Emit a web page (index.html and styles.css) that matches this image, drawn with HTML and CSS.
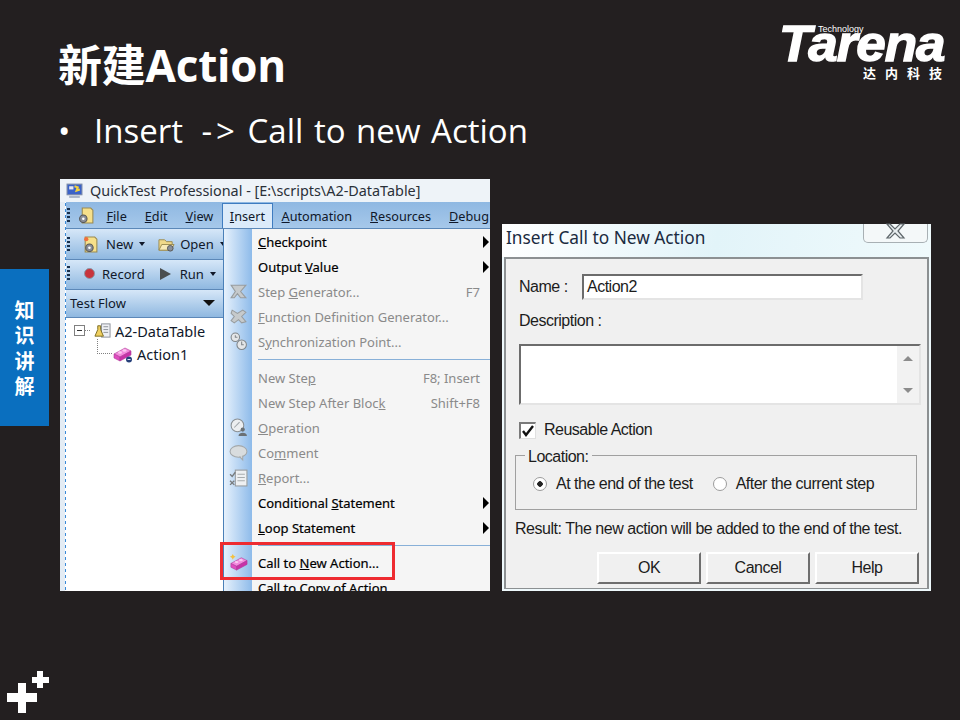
FILE: index.html
```html
<!DOCTYPE html>
<html>

<head>
  <meta charset="utf-8">
  <title>新建Action</title>
  <link rel="stylesheet" href="styles.css">
</head>

<body>
  <div class="slide">
    <div class="head">
      <h1 class="title">新建Action</h1>
      <div class="logo">
        <span class="logo-tech">Technology</span>
        <div class="logo-name">Tarena</div>
        <div class="logo-cn">达内科技</div>
      </div>
    </div>

    <div class="bullet"><span class="dot">•</span><span class="bullet-text">Insert  <span class="arw">-&gt;</span> <span class="bullet-end">Call to new Action</span></span></div>

    <div class="shots">
      <!-- QTP window -->
      <div class="qtp">
        <div class="qtp-title">
          <svg class="ico" viewBox="0 0 16 16"><rect x="1" y="2" width="14" height="10" fill="#3a62c8" stroke="#7b8aa8"/><rect x="3" y="4" width="4" height="3" fill="#e8e8f0"/><path d="M8 4l3 1-1 3 3-1" stroke="#f4d23c" stroke-width="2" fill="none"/><rect x="3" y="13" width="10" height="2" fill="#a8b4c8"/></svg>
          QuickTest Professional - [E:\scripts\A2-DataTable]
        </div>
        <div class="tb tb-menu">
          <span class="grip"></span>
          <svg class="ico" viewBox="0 0 16 16"><path d="M4 1h8l2 2v12H4z" fill="#f6e08a" stroke="#9a8a50"/><circle cx="5" cy="11" r="3.5" fill="#8a8f98" stroke="#555"/><circle cx="5" cy="11" r="1.2" fill="#fff"/></svg>
          <span class="tb-item"><u>F</u>ile</span>
          <span class="tb-item"><u>E</u>dit</span>
          <span class="tb-item"><u>V</u>iew</span>
          <span class="tb-item tb-open"><u>I</u>nsert</span>
          <span class="tb-item"><u>A</u>utomation</span>
          <span class="tb-item"><u>R</u>esources</span>
          <span class="tb-item"><u>D</u>ebug</span>
        </div>
        <div class="tb tb-tools">
          <span class="grip"></span>
          <svg class="ico ico-new" viewBox="0 0 16 16"><path d="M3 1h9l2 2v12H3z" fill="#f6e08a" stroke="#9a8a50"/><circle cx="4" cy="3" r="2" fill="#f0703c"/><circle cx="7" cy="11" r="3.5" fill="#8a8f98" stroke="#555"/><circle cx="7" cy="11" r="1.2" fill="#fff"/></svg>
          <span class="tb-item">New</span><span class="caret"></span>
          <svg class="ico ico-open" viewBox="0 0 18 16"><path d="M1 3h6l2 2h6v9H1z" fill="#f0d98a" stroke="#9a8a50"/><path d="M1 14l3-6h13l-3 6z" fill="#f8eab8" stroke="#9a8a50"/><circle cx="13" cy="12" r="3" fill="#8a8f98" stroke="#555"/></svg>
          <span class="tb-item">Open</span><span class="caret"></span>
        </div>
        <div class="tb tb-tools">
          <span class="grip"></span>
          <span class="rec"></span>
          <span class="tb-item">Record</span>
          <span class="play"></span>
          <span class="tb-item">Run</span><span class="caret"></span>
        </div>
        <div class="tb tb-flow">
          <span>Test Flow</span>
          <span class="flow-arrow"></span>
        </div>
        <div class="tree">
          <div class="tree-row">
            <span class="minus"></span><span class="hline"></span>
            <svg class="ico" viewBox="0 0 18 16"><rect x="8" y="1" width="9" height="14" fill="#eef0f4" stroke="#8a8f98"/><path d="M10 4h5M10 7h5M10 10h5" stroke="#8a8f98"/><path d="M4 3h3v4l3 7H1l3-7z" fill="#f0d060" stroke="#7a6a20"/></svg>
            <span>A2-DataTable</span>
          </div>
          <div class="tree-row tree-child">
            <span class="elbow"></span>
            <svg class="ico ico-brick" viewBox="0 0 20 18"><path d="M1 9l11-6 6 3-11 6z" fill="#f48ade" stroke="#b03c98" stroke-width=".6"/><path d="M1 9l6 3v4l-6-3z" fill="#e04cc0" stroke="#b03c98" stroke-width=".6"/><path d="M7 12l11-6v4L7 16z" fill="#c832a8" stroke="#b03c98" stroke-width=".6"/><ellipse cx="7" cy="7.500" rx="2" ry="1.200" fill="#fbc8f0"/><ellipse cx="11.500" cy="5.500" rx="2" ry="1.200" fill="#fbc8f0"/><circle cx="16" cy="14.500" r="3" fill="#26407a"/><path d="M14.500 14.500h3" stroke="#dfe6f4"/></svg>
            <span>Action1</span>
          </div>
        </div>

        <div class="menu">
          <div class="mi"><span class="mi-ico"></span><span class="mi-label"><u>C</u>heckpoint</span><span class="arrow"></span></div>
          <div class="mi"><span class="mi-ico"></span><span class="mi-label">Output <u>V</u>alue</span><span class="arrow"></span></div>
          <div class="mi off">
            <span class="mi-ico"><svg viewBox="0 0 18 16"><path d="M2 2h14L11 8l5 6h-5L8 10l-3 4H2l4-6z" fill="#c6cacc" stroke="#989c9e"/></svg></span>
            <span class="mi-label">Step <u>G</u>enerator...</span><span class="key">F7</span>
          </div>
          <div class="mi off">
            <span class="mi-ico"><svg viewBox="0 0 18 16"><path d="M3 2l5 3 5-3 3 2-4 4 4 5-4 1-3-3-4 3-3-2 3-4-3-3z" fill="#c6cacc" stroke="#989c9e"/></svg></span>
            <span class="mi-label"><u>F</u>unction Definition Generator...</span>
          </div>
          <div class="mi off">
            <span class="mi-ico"><svg viewBox="0 0 18 18"><circle cx="6" cy="5" r="4" fill="#e4e6e8" stroke="#80868a"/><circle cx="12" cy="12" r="4.500" fill="#e4e6e8" stroke="#80868a"/><path d="M12 9v3h2M6 3v2h2" stroke="#80868a" fill="none"/></svg></span>
            <span class="mi-label">S<u>y</u>nchronization Point...</span>
          </div>
          <div class="mi-sep"></div>
          <div class="mi off"><span class="mi-ico"></span><span class="mi-label">New Ste<u>p</u></span><span class="key">F8; Insert</span></div>
          <div class="mi off"><span class="mi-ico"></span><span class="mi-label">New Step After Bloc<u>k</u></span><span class="key">Shift+F8</span></div>
          <div class="mi off">
            <span class="mi-ico"><svg viewBox="0 0 18 18"><circle cx="8" cy="7" r="6" fill="#eceef0" stroke="#8a9094"/><path d="M5 9l5-5" stroke="#a0a6aa"/><circle cx="13" cy="11" r="2" fill="#6a7074"/><path d="M9 17c0-4 8-4 8 0z" fill="#6a7074"/></svg></span>
            <span class="mi-label"><u>O</u>peration</span>
          </div>
          <div class="mi off">
            <span class="mi-ico"><svg viewBox="0 0 18 16"><ellipse cx="9" cy="7" rx="8" ry="5.500" fill="#d8dcde" stroke="#a4a8aa"/><path d="M10 12l3 3v-4" fill="#d8dcde" stroke="#a4a8aa"/></svg></span>
            <span class="mi-label">Co<u>m</u>ment</span>
          </div>
          <div class="mi off">
            <span class="mi-ico"><svg viewBox="0 0 18 18"><rect x="6" y="2" width="11" height="15" fill="#eef0f2" stroke="#989c9e"/><path d="M8 6h7M8 9h7M8 12h7" stroke="#a8acae"/><path d="M1 6l2 2 3-4M1 12l4 4M5 12l-4 4" stroke="#787c7e" fill="none" stroke-width="1.300"/></svg></span>
            <span class="mi-label"><u>R</u>eport...</span>
          </div>
          <div class="mi"><span class="mi-ico"></span><span class="mi-label">Conditional <u>S</u>tatement</span><span class="arrow"></span></div>
          <div class="mi"><span class="mi-ico"></span><span class="mi-label"><u>L</u>oop Statement</span><span class="arrow"></span></div>
          <div class="mi-sep"></div>
          <div class="mi">
            <span class="mi-ico"><svg viewBox="0 0 20 18"><path d="M2 10l11-6 6 3-11 6z" fill="#f48ade" stroke="#b03c98" stroke-width=".6"/><path d="M2 10l6 3v4l-6-3z" fill="#e04cc0" stroke="#b03c98" stroke-width=".6"/><path d="M8 13l11-6v4L8 17z" fill="#c832a8" stroke="#b03c98" stroke-width=".6"/><ellipse cx="8" cy="8.500" rx="2" ry="1.200" fill="#fbc8f0"/><ellipse cx="12.500" cy="6.500" rx="2" ry="1.200" fill="#fbc8f0"/><path d="M4 0l1 2 2 1-2 1-1 2-1-2-2-1 2-1z" fill="#f4c040"/></svg></span>
            <span class="mi-label">Call to <u>N</u>ew Action...</span>
          </div>
          <div class="mi"><span class="mi-ico"></span><span class="mi-label">Call to Copy of Action...</span></div>
        </div>
        <div class="redbox"></div>
      </div>

      <!-- dialog -->
      <div class="dlg">
        <div class="dlg-title">
          <span>Insert Call to New Action</span>
          <span class="dlg-close"><svg viewBox="0 0 18 14"><path d="M2 0l5 5 5-5h4l-6 7 6 7h-4l-5-5-5 5H-1l6-7-6-7z" fill="#e8eef0" stroke="#5e666a" stroke-width="1.200"/></svg></span>
        </div>
        <div class="dlg-body">
          <div class="name-row">
            <span class="name-label">Name :</span>
            <div class="inset name-input">Action2</div>
          </div>
          <div class="desc-label">Description :</div>
          <div class="inset desc-box">
            <div class="scroll"><span class="up"></span><span class="down"></span></div>
          </div>
          <div class="check-row"><span class="check"><svg viewBox="0 0 14 14"><path d="M2 7l3 4 7-9" stroke="#111" stroke-width="2.400" fill="none"/></svg></span>Reusable Action</div>
          <div class="group">
            <span class="group-label">Location:</span>
            <div class="radio-row">
              <span class="radio on"></span><span class="radio-text">At the end of the test</span>
              <span class="radio"></span><span>After the current step</span>
            </div>
          </div>
          <div class="result">Result: The new action will be added to the end of the test.</div>
          <div class="btns">
            <span class="btn">OK</span>
            <span class="btn">Cancel</span>
            <span class="btn">Help</span>
          </div>
        </div>
      </div>
    </div>

    <div class="tab">知识讲解</div>

    <svg class="plus" viewBox="0 0 44 44"><path d="M12 12h8v10h11v9H20v11h-8V31H1v-9h11z" fill="#fff"/><path d="M31 0h6v6h6v6h-6v5h-6v-5h-5V6h5z" fill="#fff"/></svg>
  </div>
</body>

</html>
```

FILE: styles.css
```css
html, body {
  margin: 0;
  padding: 0;
}

.slide {
  position: relative;
  width: 960px;
  height: 720px;
  overflow: hidden;
  background: #231f20;
  color: #fff;
  font-family: "Open Sans", "Noto Sans CJK SC", sans-serif;
}

/* header */
.head {
  display: flex;
  justify-content: space-between;
  height: 100px;
  padding: 0 16px 0 58px;
}

.title {
  margin: 36px 0 0;
  font-size: 44px;
  line-height: 58px;
  font-weight: 700;
  letter-spacing: -0.2px;
}

.logo {
  position: relative;
  width: 162px;
  padding-top: 22px;
}

.logo-name {
  margin-left: -3px;
  font-family: "Liberation Sans", sans-serif;
  font-size: 50px;
  line-height: 44px;
  font-weight: 700;
  font-style: italic;
  letter-spacing: -1px;
  -webkit-text-stroke: 1.4px #fff;
  transform: scaleX(1.06);
  transform-origin: left center;
}

.logo-tech {
  position: absolute;
  left: 36px;
  top: 24px;
  font-family: "Liberation Sans", sans-serif;
  font-size: 9px;
  line-height: 10px;
}

.logo-cn {
  margin-top: -1px;
  padding-left: 81px;
  font-family: "Noto Sans CJK SC", sans-serif;
  font-size: 13px;
  line-height: 16px;
  font-weight: 700;
  letter-spacing: 9px;
  white-space: nowrap;
}

/* bullet line */
.bullet {
  display: flex;
  height: 79px;
  padding-left: 58px;
  font-size: 33px;
  line-height: 62px;
}

.dot {
  width: 36px;
}

.bullet-text {
  white-space: pre;
}

.arw {
  margin-left: 1.4px;
  letter-spacing: 4px;
}

.bullet-end {
  word-spacing: 2px;
}

/* screenshots */
.shots {
  display: flex;
  align-items: flex-end;
  gap: 12px;
  height: 412px;
  padding-left: 60px;
}

.qtp {
  position: relative;
  width: 430px;
  height: 412px;
  padding-left: 6px;
  overflow: hidden;
  color: #10182a;
  font-family: "Noto Sans", sans-serif;
  font-size: 13px;
  background:
    repeating-linear-gradient(#3a8ad8 0 3px, transparent 3px 6px) 5px 0 / 1px 100% no-repeat,
    linear-gradient(#e4ecf4, #e4ecf4) 0 0 / 5px 100% no-repeat,
    #fff;
  box-sizing: border-box;
}

.qtp-title {
  display: flex;
  align-items: center;
  gap: 7px;
  height: 23px;
  margin-left: -6px;
  padding-left: 6px;
  background: #eef3f8;
  font-size: 14.4px;
  white-space: nowrap;
  color: #2a3038;
}

.ico {
  width: 17px;
  height: 17px;
  flex: none;
}

.tb {
  display: flex;
  align-items: center;
  padding-left: 1px;
  background: linear-gradient(#d6e7f8, #8fb8e0);
  border-bottom: 1px solid #5c88b8;
  box-sizing: border-box;
  white-space: nowrap;
}

.tb-menu {
  align-items: flex-end;
  height: 27px;
  font-size: 12.7px;
  background: linear-gradient(#8fb8e2, #a6c8ea);
}

.tb-menu .grip {
  align-self: center;
}

.tb-menu .ico {
  align-self: center;
  margin: 0 2.5px 0 8px;
}

.tb-menu .tb-item {
  padding: 0 9px;
  line-height: 24px;
}

.tb-menu .tb-open {
  padding: 0 6.5px;
  background: #dcebfa;
  border: 1px solid #3f7cc0;
  border-bottom: 0;
}

.tb-tools {
  height: 31px;
  gap: 5px;
}

.tb-tools + .tb-tools {
  height: 30px;
  padding-bottom: 2px;
}

.ico-new {
  margin: 0 2px 0 7px;
}

.ico-open {
  margin: 0 0 0 8px;
}

.grip {
  width: 3px;
  height: 15px;
  background: repeating-linear-gradient(#18304c 0 2px, transparent 2px 4px);
  flex: none;
}

.caret {
  width: 0;
  height: 0;
  margin-left: 1px;
  border: 3px solid transparent;
  border-top: 4px solid #10182a;
  border-bottom: 0;
  flex: none;
}

.rec {
  width: 11px;
  height: 11px;
  margin: 0 2px 0 9px;
  border-radius: 50%;
  background: #c8343c;
  border: 1px solid #8a98a8;
  box-sizing: border-box;
}

.play {
  width: 0;
  height: 0;
  margin: 0 4px 0 10px;
  border-left: 11px solid #4a4e50;
  border-top: 6px solid transparent;
  border-bottom: 6px solid transparent;
}

.tb-flow {
  justify-content: space-between;
  height: 28px;
  width: 158px;
  padding: 0 9px 2px 4px;
}

.flow-arrow {
  width: 0;
  height: 0;
  border: 6px solid transparent;
  border-top: 6px solid #111;
  border-bottom: 0;
}

.tree {
  padding: 1px 0 0 8px;
}

.tree-row {
  display: flex;
  align-items: center;
  gap: 4px;
  height: 23px;
  font-size: 14.5px;
}

.minus {
  width: 9px;
  height: 9px;
  border: 1px solid #808080;
  background: linear-gradient(#333, #333) center / 5px 1px no-repeat;
}

.hline {
  width: 5px;
  border-top: 1px dotted #808080;
  margin-left: -4px;
}

.tree-child {
  padding-left: 23px;
}

.elbow {
  width: 14px;
  height: 14px;
  margin-top: -14px;
  border-left: 1px dotted #808080;
  border-bottom: 1px dotted #808080;
}

.ico-brick {
  width: 20px;
  height: 18px;
  margin-left: -3px;
}

/* open menu, over the toolbars */
.menu {
  position: absolute;
  left: 163px;
  top: 50px;
  width: 267px;
  height: 362px;
  overflow: hidden;
  background: #f5f5f5;
  border-left: 1px solid #4a80b8;
  box-sizing: border-box;
}

.menu::before {
  content: "";
  position: absolute;
  left: 0;
  top: 0;
  bottom: 0;
  width: 28px;
  background: linear-gradient(90deg, #e6f1fc, #8ebbea);
}

.mi {
  position: relative;
  display: flex;
  align-items: center;
  height: 25px;
  padding-right: 10px;
  white-space: nowrap;
  color: #000;
  -webkit-text-stroke: 0.2px #000;
}

.mi-ico {
  display: flex;
  justify-content: center;
  width: 28px;
  margin-right: 6px;
}

.mi-ico svg {
  width: 19px;
  height: 19px;
}

.mi-label {
  flex: 1;
}

.off {
  color: #8a8a8a;
  -webkit-text-stroke: 0;
}

.key {
  color: #8a8a8a;
}

.arrow {
  width: 0;
  height: 0;
  margin-right: -9px;
  border-left: 6px solid #000;
  border-top: 6px solid transparent;
  border-bottom: 6px solid transparent;
}

.mi-sep {
  position: relative;
  height: 11px;
  margin-left: 34px;
}

.mi-sep + .mi ~ .mi-sep {
  height: 10px;
}

.mi-sep::after {
  content: "";
  position: absolute;
  left: 0;
  right: 0;
  top: 5px;
  border-top: 1px solid #88b0d8;
}

.redbox {
  position: absolute;
  left: 160px;
  top: 363px;
  width: 175px;
  height: 38px;
  border: 3px solid #ee2b30;
  box-sizing: border-box;
}

/* dialog */
.dlg {
  width: 429px;
  height: 367px;
  display: flex;
  flex-direction: column;
  background: #eef8fb;
  color: #1c1c1c;
  font-family: "Liberation Sans", sans-serif;
  font-size: 16px;
  letter-spacing: -0.5px;
}

.dlg-title {
  display: flex;
  justify-content: space-between;
  height: 33px;
  padding: 0 3px 0 4px;
  background: linear-gradient(100deg, #fff, #e2f4f9 50%, #f0fafc);
  color: #1a2a40;
  font-family: "Noto Sans", sans-serif;
  font-size: 17.3px;
  line-height: 27px;
  letter-spacing: 0;
  flex: none;
}

.dlg-close {
  display: flex;
  justify-content: center;
  width: 65px;
  height: 19px;
  padding-left: 2px;
  border: 1px solid #a8b0b4;
  border-top: 0;
  border-radius: 0 0 5px 5px;
  background: #f4f8f9;
  box-sizing: border-box;
}

.dlg-close svg {
  width: 18px;
  height: 14px;
  overflow: visible;
}

.dlg-body {
  flex: 1;
  margin: 0 2px 2px;
  padding: 15px 10px 0 11px;
  background: #f0f0f0;
  border: 2px solid #8c9092;
  border-bottom-width: 1px;
  box-sizing: border-box;
}

.name-row {
  display: flex;
  align-items: center;
  height: 26px;
  padding-left: 2px;
}

.name-label {
  width: 63px;
}

.inset {
  background: #fff;
  border: 2px solid #e4e4e4;
  border-top-color: #6c6c6c;
  border-left-color: #6c6c6c;
  box-sizing: border-box;
}

.name-input {
  width: 281px;
  height: 26px;
  padding-left: 3px;
  line-height: 22px;
}

.desc-label {
  margin-top: 12px;
  padding-left: 2px;
  line-height: 18px;
}

.desc-box {
  display: flex;
  justify-content: flex-end;
  width: 402px;
  height: 61px;
  margin: 14px 0 0 2px;
}

.scroll {
  display: flex;
  flex-direction: column;
  justify-content: space-between;
  align-items: center;
  width: 22px;
  padding: 10px 0;
  background: #f2f2f2;
  box-sizing: border-box;
}

.up, .down {
  width: 0;
  height: 0;
  border: 5px solid transparent;
}

.up {
  border-bottom: 5px solid #8c8c8c;
  border-top: 0;
}

.down {
  border-top: 5px solid #8c8c8c;
  border-bottom: 0;
}

.check-row {
  display: flex;
  align-items: center;
  gap: 8px;
  height: 18px;
  margin: 16px 0 0 2px;
}

.check {
  width: 17px;
  height: 17px;
  background: #fff;
  border: 1px solid #e0e0e0;
  border-top: 2px solid #7a7a7a;
  border-left: 2px solid #7a7a7a;
  box-sizing: border-box;
}

.check svg {
  display: block;
  width: 14px;
  height: 14px;
}

.group {
  position: relative;
  width: 402px;
  height: 55px;
  margin: 16px 0 0 -2px;
  border: 1px solid #a0a0a0;
  box-sizing: border-box;
}

.group-label {
  position: absolute;
  left: 9px;
  top: -8px;
  padding: 0 4px 0 3px;
  background: #f0f0f0;
  line-height: 18px;
}

.radio-row {
  display: flex;
  align-items: center;
  height: 18px;
  margin: 19px 0 0 17px;
}

.radio {
  width: 14px;
  height: 14px;
  margin-right: 9px;
  border: 1px solid #9c9c9c;
  border-radius: 50%;
  background: #fff;
  box-sizing: border-box;
}

.radio.on {
  background: radial-gradient(circle, #222 0 2.5px, #fff 3px);
}

.radio-text {
  margin-right: 20px;
}

.result {
  margin: 10px 0 0 -2px;
  line-height: 18px;
  letter-spacing: -0.47px;
}

.btns {
  display: flex;
  justify-content: flex-end;
  gap: 5px;
  margin: 14px -2px 0 0;
}

.btn {
  width: 104px;
  height: 32px;
  background: #f0f0f0;
  border: 2px solid #6e6e6e;
  border-top-color: #fff;
  border-left-color: #fff;
  box-sizing: border-box;
  text-align: center;
  line-height: 28px;
}

/* side tab, over the slide */
.tab {
  position: absolute;
  left: 0;
  top: 269px;
  display: flex;
  align-items: center;
  justify-content: center;
  width: 49px;
  height: 157px;
  padding-top: 6px;
  box-sizing: border-box;
  background: #0a6fbf;
  font-family: "Noto Sans CJK SC", sans-serif;
  font-size: 20px;
  font-weight: 700;
  line-height: 49px;
  letter-spacing: 5.5px;
  writing-mode: vertical-rl;
}

.plus {
  position: absolute;
  left: 6px;
  top: 671px;
  width: 44px;
  height: 44px;
}
```
